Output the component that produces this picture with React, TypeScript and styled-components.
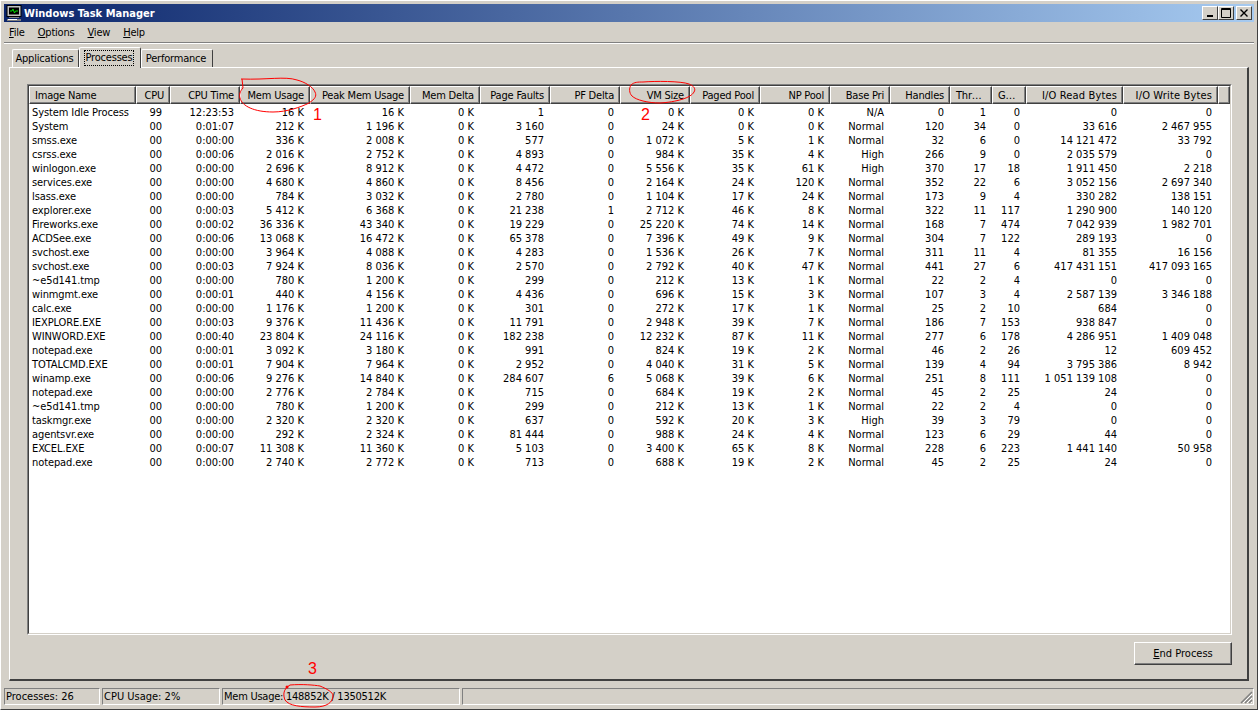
import styled, { createGlobalStyle } from "styled-components";

const GlobalStyle = createGlobalStyle`
  html, body {
    margin: 0;
    padding: 0;
    background: #d4d0c8;
  }
  body {
    font-family: "DejaVu Sans", Tahoma, sans-serif;
    font-stretch: condensed;
    font-size: 11px;
    color: #000;
    overflow: hidden;
  }
`;

const COLUMNS = "107px 34px 70px 70px 100px 70px 70px 70px 70px 70px 70px 60px 60px 42px 34px 97px 95px 1fr";

const Window = styled.div`
  position: relative;
  box-sizing: border-box;
  display: flex;
  flex-direction: column;
  width: 1258px;
  height: 710px;
  padding: 3px 3px 4px;
  background: #d4d0c8;
  border-top: 1px solid #fff;
  border-left: 1px solid #fff;
  border-right: 1px solid #404040;
  border-bottom: 1px solid #404040;
`;

const TitleBar = styled.div`
  display: flex;
  align-items: center;
  height: 18px;
  flex: none;
  padding: 0 2px 0 2px;
  background: linear-gradient(90deg, #0a246a 0%, #a6caf0 100%);
`;

const TitleText = styled.div`
  margin-left: 2px;
  font-weight: 700;
  font-size: 11px;
  color: #fff;
  flex: 1;
`;

const WinButton = styled.div<{ $gap?: number }>`
  box-sizing: border-box;
  display: flex;
  align-items: center;
  justify-content: center;
  width: 16px;
  height: 14px;
  margin-left: ${(p) => p.$gap ?? 0}px;
  background: #d4d0c8;
  border-top: 1px solid #fff;
  border-left: 1px solid #fff;
  border-right: 1px solid #404040;
  border-bottom: 1px solid #404040;
`;

const MenuBar = styled.div`
  display: flex;
  align-items: center;
  height: 20px;
  flex: none;
  padding-left: 5px;
  gap: 13px;
  letter-spacing: -0.2px;
`;

const MenuItem = styled.span`
  u {
    text-decoration: underline;
  }
`;

const Separator = styled.div`
  height: 1px;
  flex: none;
  background: #808080;
  border-bottom: 1px solid #fff;
`;

const TabRow = styled.div`
  display: flex;
  align-items: flex-end;
  height: 20px;
  flex: none;
  margin-top: 3px;
  padding-left: 8px;
  position: relative;
  z-index: 1;
  letter-spacing: -0.2px;
`;

const Tab = styled.div<{ $active?: boolean; $width: number }>`
  box-sizing: border-box;
  display: flex;
  align-items: center;
  justify-content: center;
  width: ${(p) => p.$width}px;
  height: ${(p) => (p.$active ? 21 : 18)}px;
  margin-bottom: ${(p) => (p.$active ? -1 : 0)}px;
  padding-right: 2px;
  background: #d4d0c8;
  border-top: 1px solid #fff;
  border-left: 1px solid #fff;
  border-right: 1px solid #404040;
  border-top-left-radius: 2px;
  border-top-right-radius: 2px;
`;

const TabFocus = styled.span`
  padding: 0 1px;
  outline: 1px dotted #000;
  line-height: 14px;
`;

const TabPanel = styled.div`
  box-sizing: border-box;
  flex: 1;
  display: flex;
  flex-direction: column;
  min-height: 0;
  margin: 0 5px;
  padding: 16px 15px 0 17px;
  border-top: 1px solid #fff;
  border-left: 1px solid #fff;
  border-right: 2px solid #404040;
  border-bottom: 2px solid #404040;
`;

const ListFrame = styled.div`
  box-sizing: border-box;
  height: 551px;
  flex: none;
  display: flex;
  border-top: 1px solid #808080;
  border-left: 1px solid #808080;
  border-right: 1px solid #fff;
  border-bottom: 1px solid #fff;
`;

const ListView = styled.div`
  flex: 1;
  min-width: 0;
  background: #fff;
  border-top: 1px solid #404040;
  border-left: 1px solid #404040;
  border-right: 1px solid #d4d0c8;
  border-bottom: 1px solid #d4d0c8;
  overflow: hidden;
`;

const HeaderRow = styled.div`
  display: grid;
  grid-template-columns: ${COLUMNS};
  height: 18px;
`;

const HeaderCell = styled.div<{ $left?: boolean; $loose?: boolean }>`
  box-sizing: border-box;
  display: flex;
  align-items: center;
  justify-content: ${(p) => (p.$left ? "flex-start" : "flex-end")};
  padding: 0 5px;
  background: #d4d0c8;
  white-space: nowrap;
  overflow: hidden;
  letter-spacing: ${(p) => (p.$loose ? "0.15px" : "-0.2px")};
  border-top: 1px solid #fff;
  border-left: 1px solid #fff;
  border-right: 1px solid #404040;
  border-bottom: 1px solid #404040;
  box-shadow: inset -1px -1px 0 #808080;
`;

const Rows = styled.div`
  padding-top: 2px;
`;

const Row = styled.div`
  display: grid;
  grid-template-columns: ${COLUMNS};
  height: 14px;
  line-height: 14px;
`;

const Cell = styled.div<{ $left?: boolean; $pad?: number }>`
  box-sizing: border-box;
  text-align: ${(p) => (p.$left ? "left" : "right")};
  padding: ${(p) => (p.$left ? "0 0 0 3px" : `0 ${p.$pad ?? 6}px 0 0`)};
  letter-spacing: ${(p) => (p.$left ? "-0.1px" : "0")};
  white-space: nowrap;
  overflow: hidden;
`;

const ButtonRow = styled.div`
  display: flex;
  justify-content: flex-end;
  margin-top: 7px;
`;

const EndButton = styled.div`
  box-sizing: border-box;
  display: flex;
  align-items: center;
  justify-content: center;
  width: 98px;
  height: 23px;
  background: #d4d0c8;
  border-top: 1px solid #fff;
  border-left: 1px solid #fff;
  border-right: 1px solid #404040;
  border-bottom: 1px solid #404040;
  box-shadow: inset -1px -1px 0 #808080;
`;

const StatusBar = styled.div`
  display: flex;
  height: 17px;
  flex: none;
  margin-top: 7px;
  gap: 2px;
`;

const StatusPane = styled.div<{ $width?: number; $tight?: boolean }>`
  box-sizing: border-box;
  position: relative;
  ${(p) => (p.$width ? `width: ${p.$width}px;` : "flex: 1;")}
  display: flex;
  align-items: center;
  padding-left: 1px;
  white-space: pre;
  letter-spacing: ${(p) => (p.$tight ? "-0.25px" : "0")};
  border-top: 1px solid #808080;
  border-left: 1px solid #808080;
  border-right: 1px solid #fff;
  border-bottom: 1px solid #fff;
`;

const Grip = styled.svg`
  position: absolute;
  right: 0;
  bottom: 0;
`;

const Overlay = styled.svg`
  position: absolute;
  left: -1px;
  top: -1px;
  pointer-events: none;
`;

const Mark = styled.div<{ $x: number; $y: number }>`
  position: absolute;
  left: ${(p) => p.$x}px;
  top: ${(p) => p.$y}px;
  font-family: "Liberation Sans", Arial, sans-serif;
  font-stretch: normal;
  font-size: 16px;
  line-height: 16px;
  color: #f00;
`;

const headers = [
  "Image Name", "CPU", "CPU Time", "Mem Usage", "Peak Mem Usage", "Mem Delta", "Page Faults", "PF Delta",
  "VM Size", "Paged Pool", "NP Pool", "Base Pri", "Handles", "Thr…", "G…", "I/O Read Bytes", "I/O Write Bytes", "",
];

const rows = [
  "System Idle Process|99|12:23:53|16 K|16 K|0 K|1|0|0 K|0 K|0 K|N/A|0|1|0|0|0",
  "System|00|0:01:07|212 K|1 196 K|0 K|3 160|0|24 K|0 K|0 K|Normal|120|34|0|33 616|2 467 955",
  "smss.exe|00|0:00:00|336 K|2 008 K|0 K|577|0|1 072 K|5 K|1 K|Normal|32|6|0|14 121 472|33 792",
  "csrss.exe|00|0:00:06|2 016 K|2 752 K|0 K|4 893|0|984 K|35 K|4 K|High|266|9|0|2 035 579|0",
  "winlogon.exe|00|0:00:00|2 696 K|8 912 K|0 K|4 472|0|5 556 K|35 K|61 K|High|370|17|18|1 911 450|2 218",
  "services.exe|00|0:00:00|4 680 K|4 860 K|0 K|8 456|0|2 164 K|24 K|120 K|Normal|352|22|6|3 052 156|2 697 340",
  "lsass.exe|00|0:00:00|784 K|3 032 K|0 K|2 780|0|1 104 K|17 K|24 K|Normal|173|9|4|330 282|138 151",
  "explorer.exe|00|0:00:03|5 412 K|6 368 K|0 K|21 238|1|2 712 K|46 K|8 K|Normal|322|11|117|1 290 900|140 120",
  "Fireworks.exe|00|0:00:02|36 336 K|43 340 K|0 K|19 229|0|25 220 K|74 K|14 K|Normal|168|7|474|7 042 939|1 982 701",
  "ACDSee.exe|00|0:00:06|13 068 K|16 472 K|0 K|65 378|0|7 396 K|49 K|9 K|Normal|304|7|122|289 193|0",
  "svchost.exe|00|0:00:00|3 964 K|4 088 K|0 K|4 283|0|1 536 K|26 K|7 K|Normal|311|11|4|81 355|16 156",
  "svchost.exe|00|0:00:03|7 924 K|8 036 K|0 K|2 570|0|2 792 K|40 K|47 K|Normal|441|27|6|417 431 151|417 093 165",
  "~e5d141.tmp|00|0:00:00|780 K|1 200 K|0 K|299|0|212 K|13 K|1 K|Normal|22|2|4|0|0",
  "winmgmt.exe|00|0:00:01|440 K|4 156 K|0 K|4 436|0|696 K|15 K|3 K|Normal|107|3|4|2 587 139|3 346 188",
  "calc.exe|00|0:00:00|1 176 K|1 200 K|0 K|301|0|272 K|17 K|1 K|Normal|25|2|10|684|0",
  "IEXPLORE.EXE|00|0:00:03|9 376 K|11 436 K|0 K|11 791|0|2 948 K|39 K|7 K|Normal|186|7|153|938 847|0",
  "WINWORD.EXE|00|0:00:40|23 804 K|24 116 K|0 K|182 238|0|12 232 K|87 K|11 K|Normal|277|6|178|4 286 951|1 409 048",
  "notepad.exe|00|0:00:01|3 092 K|3 180 K|0 K|991|0|824 K|19 K|2 K|Normal|46|2|26|12|609 452",
  "TOTALCMD.EXE|00|0:00:01|7 904 K|7 964 K|0 K|2 952|0|4 040 K|31 K|5 K|Normal|139|4|94|3 795 386|8 942",
  "winamp.exe|00|0:00:06|9 276 K|14 840 K|0 K|284 607|6|5 068 K|39 K|6 K|Normal|251|8|111|1 051 139 108|0",
  "notepad.exe|00|0:00:00|2 776 K|2 784 K|0 K|715|0|684 K|19 K|2 K|Normal|45|2|25|24|0",
  "~e5d141.tmp|00|0:00:00|780 K|1 200 K|0 K|299|0|212 K|13 K|1 K|Normal|22|2|4|0|0",
  "taskmgr.exe|00|0:00:00|2 320 K|2 320 K|0 K|637|0|592 K|20 K|3 K|High|39|3|79|0|0",
  "agentsvr.exe|00|0:00:00|292 K|2 324 K|0 K|81 444|0|988 K|24 K|4 K|Normal|123|6|29|44|0",
  "EXCEL.EXE|00|0:00:07|11 308 K|11 360 K|0 K|5 103|0|3 400 K|65 K|8 K|Normal|228|6|223|1 441 140|50 958",
  "notepad.exe|00|0:00:00|2 740 K|2 772 K|0 K|713|0|688 K|19 K|2 K|Normal|45|2|25|24|0",
];

const TaskIcon = () => (
  <svg width="16" height="16" viewBox="0 0 16 16">
    <rect x="1" y="0.5" width="14" height="11" fill="#c0c0c0" stroke="#000" />
    <rect x="3" y="2.5" width="10" height="7" fill="#000" />
    <path d="M4 6h2l1-2 1.5 4 1-2H12" fill="none" stroke="#00e000" />
    <path d="M3 12h10v1H3zM1 14h14v2H1z" fill="#808080" />
    <path d="M2 14.5h9" stroke="#fff" />
  </svg>
);

const App = () => {
  return (
    <>
      <GlobalStyle />
      <Window>
        <TitleBar>
          <TaskIcon />
          <TitleText>Windows Task Manager</TitleText>
          <WinButton>
            <svg width="8" height="8" viewBox="0 0 8 8"><path d="M1 6h6v2H1z" fill="#000" /></svg>
          </WinButton>
          <WinButton>
            <svg width="10" height="10" viewBox="0 0 10 10"><path d="M.5 1.5h9v8h-9zM.5 .5h9v1h-9z" fill="none" stroke="#000" /></svg>
          </WinButton>
          <WinButton $gap={2}>
            <svg width="8" height="8" viewBox="0 0 8 8"><path d="M.5 .5l7 7M7.5 .5l-7 7" stroke="#000" strokeWidth="1.4" /></svg>
          </WinButton>
        </TitleBar>
        <MenuBar>
          <MenuItem><u>F</u>ile</MenuItem>
          <MenuItem><u>O</u>ptions</MenuItem>
          <MenuItem><u>V</u>iew</MenuItem>
          <MenuItem><u>H</u>elp</MenuItem>
        </MenuBar>
        <Separator />
        <TabRow>
          <Tab $width={67}>Applications</Tab>
          <Tab $width={62} $active><TabFocus>Processes</TabFocus></Tab>
          <Tab $width={72}>Performance</Tab>
        </TabRow>
        <TabPanel>
          <ListFrame>
            <ListView>
              <HeaderRow>
                {headers.map((h, i) => (
                  <HeaderCell key={i} $left={i === 0 || h.endsWith("…")} $loose={h.startsWith("I/O")}>{h}</HeaderCell>
                ))}
              </HeaderRow>
              <Rows>
                {rows.map((r, i) => (
                  <Row key={i}>
                    {r.split("|").map((c, j) => (
                      <Cell key={j} $left={j === 0} $pad={j === 1 ? 8 : 6}>{c}</Cell>
                    ))}
                  </Row>
                ))}
              </Rows>
            </ListView>
          </ListFrame>
          <ButtonRow>
            <EndButton><span><u>E</u>nd Process</span></EndButton>
          </ButtonRow>
        </TabPanel>
        <StatusBar>
          <StatusPane $width={96}>Processes: 26</StatusPane>
          <StatusPane $width={118}>CPU Usage: 2%</StatusPane>
          <StatusPane $width={238} $tight>Mem Usage: 148852K / 1350512K</StatusPane>
          <StatusPane>
            <Grip width="13" height="13" viewBox="0 0 13 13">
              <path d="M12 1L1 12M12 5L5 12M12 9L9 12" stroke="#808080" strokeWidth="1.5" />
              <path d="M12 3L3 12M12 7L7 12M12 11L11 12" stroke="#fff" />
            </Grip>
          </StatusPane>
        </StatusBar>
        <Overlay width="1258" height="710" viewBox="0 0 1258 710">
          <g fill="none" stroke="#f00">
            <path d="M242 79l1 9c-3 3-4 7-3 10 2 8 14 14 33 14 14 0 28-5 36-9 6-4 8-7 6-11-2-5-10-10-18-12-12-4-30 0-56-1" />
            <path d="M643 82c12-1 38-1 46 2 5 2 7 5 5 8-3 6-18 10-34 11-12 0-24-3-28-7-3-3-3-8-1-11 3-3 7-3 12-3z" />
            <path d="M290 685c12-1 24 0 30 1 7 3 13 6 13 10 0 6-6 11-18 11-14 0-26-1-30-7-2-5-2-11 5-15z" />
          </g>
          <circle cx="287" cy="687" r="1.5" fill="#f00" />
        </Overlay>
        <Mark $x={312} $y={106}>1</Mark>
        <Mark $x={640} $y={106}>2</Mark>
        <Mark $x={307} $y={660}>3</Mark>
      </Window>
    </>
  );
};

export default App;
